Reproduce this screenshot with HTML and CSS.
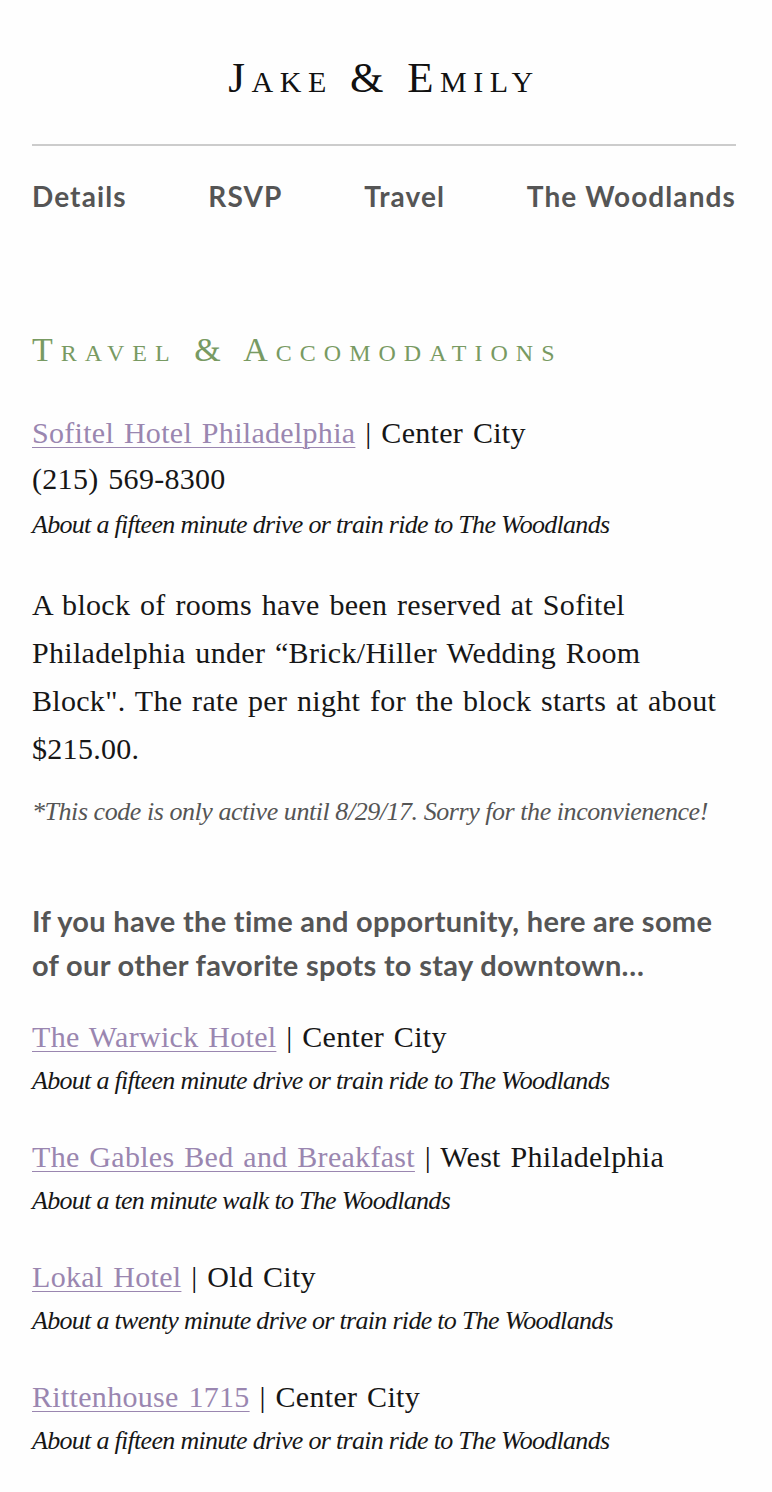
FILE: index.html
```html
<!DOCTYPE html>
<html lang="en">
<head>
<meta charset="utf-8">
<title>Jake &amp; Emily — Travel</title>
<link rel="stylesheet" href="styles.css">
</head>
<body>
<div class="page">
  <header class="masthead">
    <h1 class="site-title">Jake &amp; Emily</h1>
  </header>
  <nav class="nav">
    <a href="#">Details</a>
    <a href="#">RSVP</a>
    <a href="#">Travel</a>
    <a href="#">The Woodlands</a>
  </nav>
  <main class="content">
    <h2 class="section-title">Travel &amp; Accomodations</h2>
    <div class="hotel main-hotel">
      <p class="line"><a href="#">Sofitel Hotel Philadelphia</a> | Center City</p>
      <p class="line">(215) 569-8300</p>
      <p class="line note-italic">About a fifteen minute drive or train ride to The Woodlands</p>
    </div>
    <p class="body-text">A block of rooms have been reserved at Sofitel Philadelphia under “Brick/Hiller Wedding Room Block". The rate per night for the block starts at about $215.00.</p>
    <p class="fine">*This code is only active until 8/29/17. Sorry for the inconvienence!</p>
    <h3 class="lead">If you have the time and opportunity, here are some of our other favorite spots to stay downtown…</h3>
    <div class="hotel">
      <p class="line"><a href="#">The Warwick Hotel</a> | Center City</p>
      <p class="line note-italic">About a fifteen minute drive or train ride to The Woodlands</p>
    </div>
    <div class="hotel">
      <p class="line"><a href="#">The Gables Bed and Breakfast</a> | West Philadelphia</p>
      <p class="line note-italic">About a ten minute walk to The Woodlands</p>
    </div>
    <div class="hotel">
      <p class="line"><a href="#">Lokal Hotel</a> | Old City</p>
      <p class="line note-italic">About a twenty minute drive or train ride to The Woodlands</p>
    </div>
    <div class="hotel">
      <p class="line"><a href="#">Rittenhouse 1715</a> | Center City</p>
      <p class="line note-italic">About a fifteen minute drive or train ride to The Woodlands</p>
    </div>
  </main>
</div>
</body>
</html>
```

FILE: styles.css
```css
html, body {
  margin: 0;
  padding: 0;
  background: #fefefe;
}
body {
  font-family: "Liberation Serif", "DejaVu Serif", serif;
  color: #161616;
}
.page {
  padding: 0 36px 0 32px;
}
.masthead {
  padding-top: 52px;
  padding-bottom: 40px;
  border-bottom: 2px solid #cccccc;
  text-align: center;
}
.site-title {
  margin: 0;
  font-weight: normal;
  font-size: 43px;
  line-height: 52px;
  font-variant: small-caps;
  letter-spacing: 6.5px;
  color: #111;
}
.nav {
  display: flex;
  justify-content: space-between;
  padding-top: 30px;
}
.nav a {
  font-family: "Lato", "Open Sans", sans-serif;
  font-weight: 700;
  font-size: 28px;
  line-height: 40px;
  color: #555555;
  text-decoration: none;
  letter-spacing: 1.1px;
}
.content {
  padding-top: 112px;
  padding-bottom: 40px;
}
.section-title {
  margin: 0 0 38px;
  font-weight: normal;
  font-variant: small-caps;
  font-size: 34px;
  line-height: 44px;
  letter-spacing: 8px;
  color: #789a62;
}
.line {
  margin: 0;
  font-size: 30px;
  line-height: 46px;
  letter-spacing: 0.3px;
  word-spacing: 2px;
}
.line a {
  color: #9a86b0;
  text-decoration: underline;
  text-decoration-thickness: 1px;
  text-underline-offset: 4px;
}
.note-italic {
  font-style: italic;
  font-size: 26px;
  letter-spacing: -0.7px;
  word-spacing: 0;
}
.main-hotel {
  margin-bottom: 33px;
}
.body-text {
  margin: 0;
  font-size: 30px;
  line-height: 48px;
  letter-spacing: 0.3px;
  word-spacing: 2px;
}
.fine {
  margin: 16px 0 0;
  font-style: italic;
  font-size: 26px;
  line-height: 46px;
  letter-spacing: -0.45px;
  color: #555555;
}
.lead {
  margin: 64px 0 28px;
  font-family: "Lato", "Open Sans", sans-serif;
  font-weight: 700;
  font-size: 29px;
  line-height: 44px;
  letter-spacing: 0.3px;
  color: #555555;
}
.hotel + .hotel {
  margin-top: 32px;
}
.hotel .line {
  line-height: 44px;
}
.main-hotel .line {
  line-height: 46px;
}
```
